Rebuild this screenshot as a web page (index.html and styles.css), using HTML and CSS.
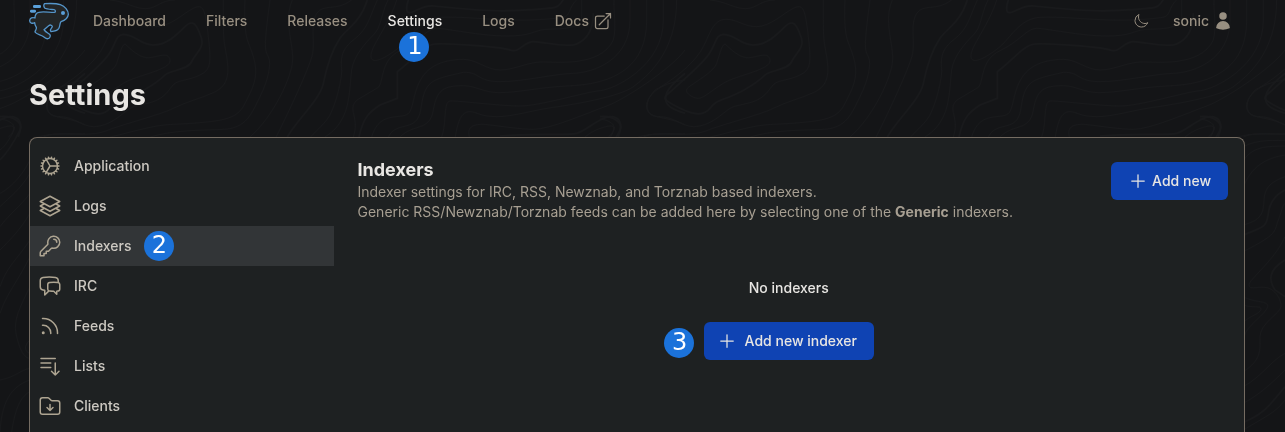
FILE: index.html
```html
<!DOCTYPE html>
<html lang="en">
<head>
  <meta charset="UTF-8">
  <title>Settings</title>
  <link rel="stylesheet" href="styles.css">
</head>
<body>
  <!-- contour lines, repeated every 600px -->
  <svg class="contours" aria-hidden="true">
    <defs>
      <pattern id="contour-tile" width="600" height="600" patternUnits="userSpaceOnUse" viewBox="0 0 1800 1800">
        <g id="contour-lines">
          <g transform="translate(180 0)">
            <path d="M150 0C200 5 220 25 255 26S300 0 345 0"/>
            <path d="M0 262C60 225 110 180 130 140S160 60 195 58S250 80 290 80S370 40 400 25S435 25 445 110S450 210 420 225S360 240 345 250S320 295 270 308S220 315 190 340S130 380 100 380S40 350 0 350S-50 320 -30 290S-15 272 0 262"/>
            <path class="bold" d="M190 103C230 105 240 135 280 135S350 105 375 80S410 75 423 110S405 160 395 185S330 210 315 225S260 270 215 288S165 305 150 325S110 350 60 325S10 295 20 285S120 200 145 165S165 105 190 103"/>
            <path d="M195 132C215 150 235 170 260 173S325 150 330 180S230 225 190 250S130 295 115 295S75 280 80 268S160 220 170 190S185 135 195 132"/>
            <path d="M490 0C490 130 490 110 500 170S500 260 460 278S380 305 340 325S180 375 140 392S40 400 0 402S-30 404 -50 411"/>
            <path d="M555 0C550 120 565 120 580 170S585 250 565 290S540 355 450 365S330 370 280 380S180 405 150 411"/>
            <path d="M630 0C610 150 615 150 625 170S625 240 600 290S560 385 490 388S340 390 270 411"/>
            <path d="M697 0C670 60 700 130 698 180S640 350 570 411"/>
            <path d="M875 0C830 35 790 10 770 40S765 120 758 160S670 370 648 411"/>
            <path class="bold" d="M922 0C900 70 860 85 840 115S800 200 790 250S710 360 682 411"/>
            <path d="M952 0C925 60 925 85 880 120S845 190 845 215S825 330 800 360S760 400 752 411"/>
            <path d="M984 0C960 50 965 80 940 105S880 170 875 210S870 310 850 350S810 400 795 411"/>
          </g>
          <g transform="translate(1200 0)">
            <path class="bold" d="M25 0C20 15 15 40 30 38S70 15 100 18S260 35 330 32S450 25 465 22S480 10 490 0"/>
            <path d="M-10 0C-35 80 -90 140 -87 170S-30 165 0 140S60 55 120 52S250 58 330 60S480 55 495 50S510 15 530 0"/>
            <path d="M-140 411C-120 350 -160 330 -129 300L-65 262C-48 245 -60 180 0 152S80 85 110 85S240 108 320 108S400 90 440 88S540 90 545 50V0"/>
            <path class="bold" d="M-123 411C-110 350 -90 335 -60 315L-8 295V215C40 180 70 135 105 132S300 140 330 150S370 125 400 125S500 145 530 132S580 90 580 40"/>
            <path d="M-85 411C-60 320 20 370 32 330C50 290 40 180 190 178C230 178 260 210 300 210S380 188 420 186S600 205 640 120C650 80 640 30 642 0"/>
            <path d="M-35 411C-10 360 50 400 62 330C75 240 90 240 190 217C240 215 230 245 300 245S460 222 520 220S690 180 690 60V0"/>
            <path d="M0 411C40 370 90 395 100 330C110 270 130 257 190 257C230 258 250 278 300 278S420 262 500 258S740 240 740 60V0"/>
            <path d="M125 411C140 370 130 305 150 303S300 318 360 318S560 275 600 272S790 200 790 60V0"/>
            <path d="M166 411C175 350 190 335 210 335S240 350 290 350S400 330 460 322S660 290 700 260S830 160 830 0"/>
            <path d="M208 411C200 380 220 375 240 373S350 388 400 388S560 340 620 318S820 200 855 150"/>
            <path class="bold" d="M300 408C420 398 500 408 530 400S600 350 630 350S670 370 655 411"/>
            <path d="M555 411C580 390 610 380 630 378S640 400 625 411"/>
          </g>
          <g transform="translate(75 0)">
            <path class="bold" d="M180 220C130 260 120 280 122 300S150 330 180 340"/>
            <path d="M180 240C100 250 60 290 67 325S120 345 180 375"/>
            <path d="M40 411C80 398 130 402 180 402M40 450C80 420 130 420 180 422M50 490C80 435 130 440 180 438M55 560C80 500 120 475 180 465"/>
            <path d="M55 675C110 660 115 640 117 600S140 545 180 530"/>
            <path class="bold" d="M55 705C120 680 125 680 130 640S160 580 180 570M180 780C130 810 130 840 150 870L180 890"/>
            <path d="M55 755C160 700 145 700 160 660S170 620 180 610M180 710C150 780 70 840 72 855S90 860 120 862S170 900 168 920S105 970 105 1010S110 1080 55 1115"/>
            <path d="M55 890C90 910 130 900 128 920S60 980 58 1010M55 915C80 925 110 915 108 928S70 950 58 965"/>
            <path d="M55 1160C110 1130 140 1080 180 1060M55 1210C110 1180 150 1140 180 1110M55 1290C120 1250 150 1240 180 1200"/>
            <path class="bold" d="M50 1270C120 1240 130 1220 180 1160"/>
          </g>
          <path class="bold" d="M0 350C40 345 70 370 60 390S30 450 0 480"/>
          <path d="M0 357C30 360 50 375 40 395S15 440 0 450M90 480C60 540 20 570 0 580M90 520C60 570 30 590 0 620M90 580C60 620 30 640 0 680M90 640C60 690 30 720 0 750M90 720C50 780 20 800 0 860"/>
          <path d="M90 770C50 850 20 880 0 940M90 860C60 920 40 960 48 1000S70 1075 90 1075M90 1020C72 1035 72 1055 90 1060M0 1140C50 1130 60 1110 90 1105M0 1296C5 1210 30 1160 90 1140M35 1296C45 1230 60 1190 90 1175"/>
        </g>
        <use href="#contour-lines" x="-1800"/>
      </pattern>
    </defs>
    <rect width="100%" height="100%" fill="url(#contour-tile)"/>
  </svg>

  <header class="navbar">
    <a href="#" class="logo" aria-label="Home">
      <svg viewBox="87 3 120 120">
        <path class="rabbit" d="M134 11C150 10 170 10 181 14C195 19 205 31 205 43C204 53 198 60 183 65C178 71 181 78 176 86C172 92 164 94 153 95L151 90L157 80C156 74 150 74 146 77L132 89C135 95 143 99 149 103C153 107 150 115 144 116C138 118 134 112 127 108C119 104 108 102 105 96C105 91 111 88 109 82C106 77 104 73 104 68C97 72 89 69 89 62C90 54 97 51 105 54C105 46 108 39 116 37C126 34 146 37 163 37C168 36 167 30 162 29C152 28 140 28 134 24C130 20 131 13 134 11Z"/>
        <circle class="speed" cx="189" cy="39" r="6"/>
        <rect class="speed" x="99" y="15" width="24" height="9" rx="4"/>
        <rect class="speed" x="90" y="29" width="18" height="9" rx="4"/>
      </svg>
    </a>
    <nav class="nav-links">
      <a href="#">Dashboard</a>
      <a href="#">Filters</a>
      <a href="#">Releases</a>
      <a href="#" class="active">Settings<span class="step step-nav">1</span></a>
      <a href="#">Logs</a>
      <a href="#">Docs
        <svg class="icon icon-sm" viewBox="0 0 24 24"><path d="M13.5 6H5.25A2.25 2.25 0 003 8.25v10.5A2.25 2.25 0 005.25 21h10.5A2.25 2.25 0 0018 18.75V10.5m-10.5 6L21 3m0 0h-5.25M21 3v5.25"/></svg>
      </a>
    </nav>
    <div class="nav-user">
      <button class="plain" aria-label="Theme">
        <svg class="icon icon-xs" viewBox="0 0 24 24"><path d="M21.752 15.002A9.718 9.718 0 0118 15.75c-5.385 0-9.75-4.365-9.75-9.75 0-1.33.266-2.597.748-3.752A9.753 9.753 0 003 11.25C3 16.635 7.365 21 12.75 21a9.753 9.753 0 009.002-5.998z"/></svg>
      </button>
      <button class="plain">sonic
        <svg class="icon-sm user" viewBox="0 0 24 24"><path d="M7.5 6a4.5 4.5 0 119 0 4.5 4.5 0 01-9 0zM3.751 20.105a8.25 8.25 0 0116.498 0 .75.75 0 01-.437.695A18.683 18.683 0 0112 22.5c-2.786 0-5.433-.608-7.812-1.7a.75.75 0 01-.437-.695z"/></svg>
      </button>
    </div>
  </header>

  <main class="page">
    <h1>Settings</h1>

    <div class="panel">
      <aside class="sidebar">
        <a href="#">
          <svg class="icon" viewBox="0 0 24 24"><path d="M4.5 12a7.5 7.5 0 0015 0m-15 0a7.5 7.5 0 1115 0m-15 0H3m16.5 0H21m-1.5 0H12m-8.457 3.077l1.41-.513m14.095-5.13l1.41-.513M5.106 17.785l1.15-.964m11.49-9.642l1.149-.964M7.501 19.795l.75-1.3m7.5-12.99l.75-1.3m-6.063 16.658l.26-1.477m2.605-14.772l.26-1.477m0 17.726l-.26-1.477M10.698 4.614l-.26-1.477M16.5 19.794l-.75-1.299M7.5 4.205L12 12m6.894 5.785l-1.149-.964M6.256 7.178l-1.15-.964m15.352 8.864l-1.41-.513M4.954 9.435l-1.41-.514M12.002 12l-3.75 6.495"/></svg>
          Application
        </a>
        <a href="#">
          <svg class="icon" viewBox="0 0 24 24"><path d="M6.429 9.75L2.25 12l4.179 2.25m0-4.5l5.571 3 5.571-3m-11.142 0L2.25 7.5 12 2.25l9.75 5.25-4.179 2.25m0 0L21.75 12l-4.179 2.25m0 0l4.179 2.25L12 21.75 2.25 16.5l4.179-2.25m11.142 0l-5.571 3-5.571-3"/></svg>
          Logs
        </a>
        <a href="#" class="active">
          <svg class="icon" viewBox="0 0 24 24"><path d="M15.75 5.25a3 3 0 013 3m3 0a6 6 0 01-7.029 5.912c-.563-.097-1.159.026-1.563.43L10.5 17.25H8.25v2.25H6v2.25H2.25v-2.818c0-.597.237-1.17.659-1.591l6.499-6.499c.404-.404.527-1 .43-1.563A6 6 0 1121.75 8.25z"/></svg>
          Indexers
          <span class="step">2</span>
        </a>
        <a href="#">
          <svg class="icon" viewBox="0 0 24 24"><path d="M20.25 8.511c.884.284 1.5 1.128 1.5 2.097v4.286c0 1.136-.847 2.1-1.98 2.193-.34.027-.68.052-1.02.072v3.091l-3-3c-1.354 0-2.694-.055-4.02-.163a2.115 2.115 0 01-.825-.242m9.345-8.334a2.126 2.126 0 00-.476-.095 48.64 48.64 0 00-8.048 0c-1.131.094-1.976 1.057-1.976 2.192v4.286c0 .837.46 1.58 1.155 1.951m9.345-8.334V6.637c0-1.621-1.152-3.026-2.76-3.235A48.455 48.455 0 0011.25 3c-2.115 0-4.198.137-6.24.402-1.608.209-2.76 1.614-2.76 3.235v6.226c0 1.621 1.152 3.026 2.76 3.235.577.075 1.157.14 1.74.194V21l4.155-4.155"/></svg>
          IRC
        </a>
        <a href="#">
          <svg class="icon" viewBox="0 0 24 24"><path d="M12.75 19.5v-.75a7.5 7.5 0 00-7.5-7.5H4.5m0-6.75h.75c7.87 0 14.25 6.38 14.25 14.25v.75M6 18.75a.75.75 0 11-1.5 0 .75.75 0 011.5 0z"/></svg>
          Feeds
        </a>
        <a href="#">
          <svg class="icon" viewBox="0 0 24 24"><path d="M3 4.5h14.25M3 9h9.75M3 13.5h9.75m4.5-4.5v12m0 0l-3.75-3.75M17.25 21L21 17.25"/></svg>
          Lists
        </a>
        <a href="#">
          <svg class="icon" viewBox="0 0 24 24"><path d="M9 13.5l3 3m0 0l3-3m-3 3v-6m1.06-4.19l-2.12-2.12a1.5 1.5 0 00-1.061-.44H4.5A2.25 2.25 0 002.25 6v12a2.25 2.25 0 002.25 2.25h15A2.25 2.25 0 0021.75 18V9a2.25 2.25 0 00-2.25-2.25h-5.379a1.5 1.5 0 01-1.06-.44z"/></svg>
          Clients
        </a>
      </aside>

      <section class="content">
        <div class="section-head">
          <div>
            <h2>Indexers</h2>
            <p>Indexer settings for IRC, RSS, Newznab, and Torznab based indexers.<br>
            Generic RSS/Newznab/Torznab feeds can be added here by selecting one of the <b>Generic</b> indexers.</p>
          </div>
          <button class="btn">
            <svg class="icon icon-sm" viewBox="0 0 24 24"><path d="M12 4.5v15m7.5-7.5h-15"/></svg>
            Add new
          </button>
        </div>

        <div class="empty">
          <p>No indexers</p>
          <div class="empty-action">
            <span class="step step-left">3</span>
            <button class="btn btn-wide">
              <svg class="icon icon-sm" viewBox="0 0 24 24"><path d="M12 4.5v15m7.5-7.5h-15"/></svg>
              Add new indexer
            </button>
          </div>
        </div>
      </section>
    </div>
  </main>
</body>
</html>
```

FILE: styles.css
```css
* {
  box-sizing: border-box;
}

body {
  display: flex;
  flex-direction: column;
  min-height: 100vh;
  margin: 0;
  padding: 0 40px 0 29px;
  background-color: #141517;
  color: #e8e6e3;
  font-family: Inter, "Liberation Sans", sans-serif;
  font-size: 14px;
  line-height: 20px;
}

a {
  color: inherit;
  text-decoration: none;
}

h1, h2, p {
  margin: 0;
}

/* background */
.contours {
  position: fixed;
  top: 0;
  left: 0;
  width: 100%;
  height: 100%;
  z-index: -1;
}

.contours path {
  fill: none;
  stroke: #191a1c;
  stroke-width: 3;
}

.contours .bold {
  stroke-width: 5;
}

/* icons */
.icon {
  width: 24px;
  height: 24px;
  flex-shrink: 0;
  fill: none;
  stroke: currentColor;
  stroke-width: 1.5;
  stroke-linecap: round;
  stroke-linejoin: round;
}

.icon-sm {
  width: 20px;
  height: 20px;
}

.icon-xs {
  width: 16px;
  height: 16px;
}

.user {
  fill: currentColor;
}

/* top bar */
.navbar {
  display: flex;
  align-items: center;
  height: 42px;
  color: #988f81;
  font-weight: 500;
}

.logo svg {
  display: block;
  width: 40px;
  height: 40px;
}

.rabbit {
  fill: #222526;
  stroke: #5595c9;
  stroke-width: 4;
  stroke-linejoin: round;
}

.speed {
  fill: #5a9fd8;
}

.nav-links {
  display: flex;
  gap: 40px;
  margin-left: 24px;
}

.nav-links a {
  display: flex;
  align-items: center;
  gap: 4px;
  position: relative;
}

.nav-links .active {
  color: #e8e6e3;
}

.nav-user {
  display: flex;
  align-items: center;
  gap: 24px;
  margin-left: auto;
  padding-right: 12px;
}

.plain {
  display: flex;
  align-items: center;
  gap: 4px;
  padding: 0;
  border: none;
  background: none;
  color: inherit;
  font: inherit;
  cursor: pointer;
}

/* numbered steps */
.step {
  width: 30px;
  height: 30px;
  padding-left: 2px;
  border-radius: 50%;
  background-color: #1b72da;
  color: #fff;
  font-family: "DejaVu Sans", sans-serif;
  font-size: 24px;
  font-weight: 400;
  line-height: 28px;
  text-align: center;
}

.step-nav {
  position: absolute;
  top: 100%;
  left: 50%;
  margin: 1px 0 0 -16px;
}

.step-left {
  position: absolute;
  top: 6px;
  right: 100%;
  margin-right: 10px;
}

/* page */
.page {
  display: flex;
  flex-direction: column;
  flex: 1;
}

h1 {
  margin: 35px 0 24px;
  font-size: 29px;
  font-weight: 700;
  line-height: 36px;
}

.panel {
  display: flex;
  flex: 1;
  border: 1px solid #756c62;
  border-bottom: none;
  border-radius: 8px 8px 0 0;
  background-color: #1e2122;
}

.sidebar {
  width: 25%;
  padding-top: 8px;
}

.sidebar a {
  display: flex;
  align-items: center;
  gap: 12px;
  height: 40px;
  padding: 0 8px;
  color: #cdc9c2;
  font-weight: 500;
}

.sidebar .active {
  background-color: #323537;
}

.sidebar .icon {
  color: #aea592;
}

.content {
  flex: 1;
  padding: 24px 16px 0 0;
}

.section-head {
  display: flex;
  justify-content: space-between;
  align-items: flex-start;
  padding-left: 24px;
}

h2 {
  margin-bottom: 4px;
  font-size: 18px;
  font-weight: 700;
  line-height: 16px;
}

.section-head p {
  color: #a79f92;
}

.btn {
  display: flex;
  align-items: center;
  gap: 4px;
  height: 38px;
  padding: 0 17px;
  border: none;
  border-radius: 6px;
  background-color: #0f43b3;
  color: #e8e6e3;
  font: inherit;
  font-weight: 500;
  cursor: pointer;
}

.btn:hover {
  background-color: #1450cc;
}

.btn-wide {
  gap: 8px;
  padding-left: 13px;
}

.empty {
  display: flex;
  flex-direction: column;
  align-items: center;
  gap: 24px;
  margin-right: -16px;
  padding-top: 56px;
  font-weight: 500;
}

.empty-action {
  position: relative;
}
```
